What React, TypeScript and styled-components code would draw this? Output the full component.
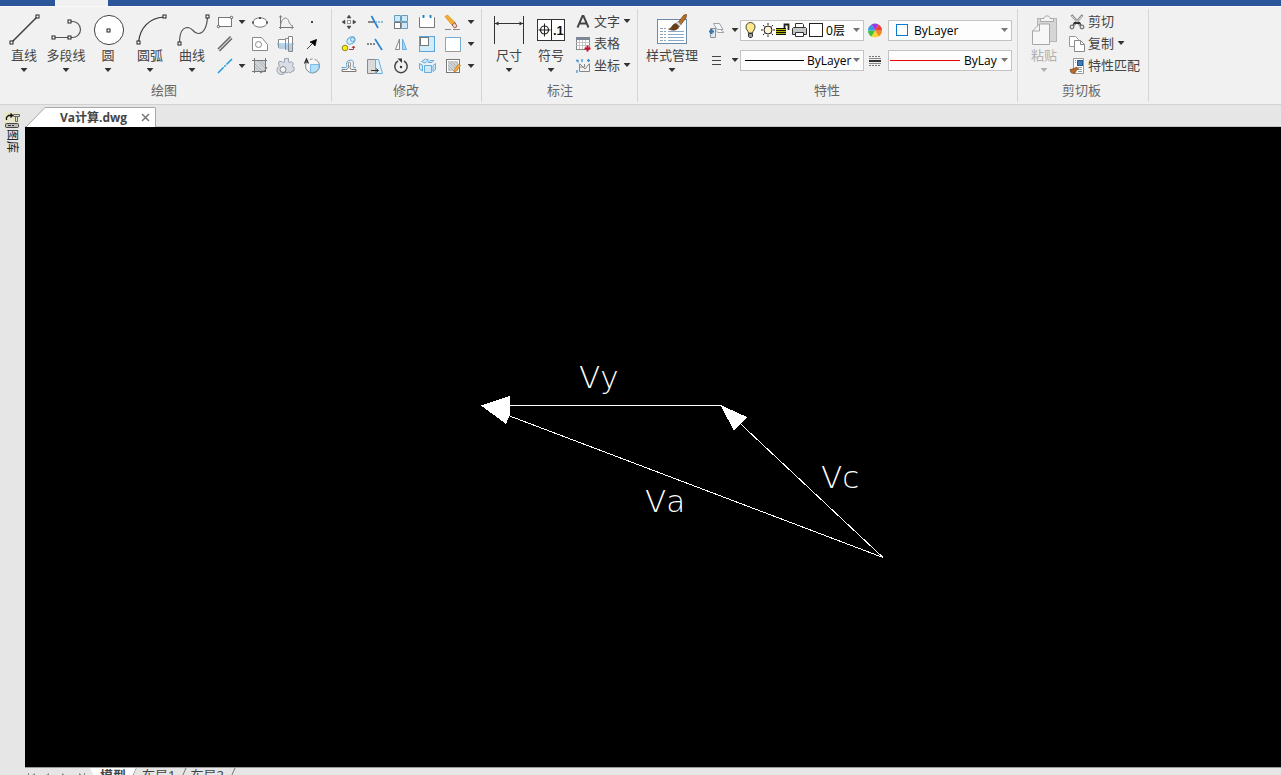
import React from "react";
import styled, { createGlobalStyle, css } from "styled-components";

const GlobalStyle = createGlobalStyle`
  *, *::before, *::after { box-sizing: border-box; }
  html, body { margin: 0; padding: 0; overflow: hidden; }
  body { background: #e6e6e6; }
  body, button, select {
    font-family: "Noto Sans", "Noto Sans CJK SC", sans-serif;
    font-size: 13px;
    color: #444;
  }
  button { border: 0; padding: 0; background: none; }
  svg { display: block; flex: none; overflow: visible; }
`;

/* ---------- frame ---------- */

const Page = styled.div`
  display: flex;
  flex-direction: column;
  height: calc(100vh + 12px);
`;

const TitleBar = styled.header`
  display: flex;
  flex: none;
  height: 6px;
  padding-left: 55px;
  background: #2b579a;
`;

const ActiveRibbonTab = styled.div`
  width: 53px;
  background: #f1f1f1;
`;

const Ribbon = styled.nav`
  display: flex;
  flex: none;
  height: 99px;
  background: #f1f1f1;
  border-top: 1px solid #f9f9f9;
  border-bottom: 1px solid #d2d2d2;
`;

const PanelBox = styled.section<{ $left: number; $right: number }>`
  display: flex;
  flex-direction: column;
  margin: 2px 0;
  padding: 2px ${(p) => p.$right}px 0 ${(p) => p.$left}px;
  border-right: 1px solid #d5d5d5;
`;

const PanelBody = styled.div`
  display: flex;
  height: 68px;
`;

const PanelTitle = styled.h2`
  margin: 0;
  font-size: 13px;
  font-weight: 400;
  line-height: 24px;
  text-align: center;
  color: #666;
`;

function Panel(props: { title: string; left: number; right: number; children: React.ReactNode }) {
  return (
    <PanelBox $left={props.left} $right={props.right}>
      <PanelBody>{props.children}</PanelBody>
      <PanelTitle>{props.title}</PanelTitle>
    </PanelBox>
  );
}

/* ---------- ribbon controls ---------- */

const LargeButton = styled.button<{ $width?: number }>`
  display: flex;
  flex-direction: column;
  align-items: center;
  width: ${(p) => p.$width ?? 42}px;
  padding-top: 3px;
  line-height: 18px;
  white-space: nowrap;
  &:disabled { color: #b0b0b0; }
`;

const Caret = styled.span<{ $color?: string }>`
  flex: none;
  width: 7px;
  height: 4px;
  background: ${(p) => p.$color ?? "#333"};
  clip-path: polygon(0 0, 100% 0, 50% 100%);
`;

const CaretSlot = styled.span`
  display: flex;
  align-items: center;
  justify-content: center;
  height: 12px;
`;

const CaretButton = styled.button`
  display: flex;
  align-items: center;
  justify-content: center;
`;

const ToolGrid = styled.div<{ $columns: string }>`
  display: grid;
  grid-template-columns: ${(p) => p.$columns};
  grid-auto-rows: 22px;
`;

const IconButton = styled.button`
  display: flex;
  align-items: center;
  justify-content: center;
`;

const ToolList = styled.div<{ $indent: number }>`
  display: flex;
  flex-direction: column;
  padding-left: ${(p) => p.$indent}px;
`;

const ListButton = styled.button`
  display: grid;
  grid-template-columns: 18px auto 10px;
  justify-content: start;
  align-items: center;
  gap: 2px;
  height: 22px;
  padding-bottom: 2px;
  line-height: 20px;
  white-space: nowrap;
`;

const WideListButton = styled(ListButton)`
  grid-template-columns: 18px auto;
`;

const PropertyGrid = styled.div`
  display: grid;
  grid-template-columns: 28px 10px 124px 24px 124px;
  grid-auto-rows: 30px;
  padding-top: 4px;
`;

const Combo = styled.label<{ $pad: number }>`
  display: flex;
  align-items: center;
  align-self: center;
  height: 21px;
  padding-left: ${(p) => p.$pad}px;
  padding-right: 3px;
  background: #fdfdfd;
  border: 1px solid #c3c3c3;
`;

const ComboSelect = styled.select<{ $indent: number; $end?: number }>`
  flex: 1;
  width: 0;
  min-width: 0;
  height: 19px;
  margin: 0;
  padding: 0 ${(p) => p.$end ?? 0}px 0 ${(p) => p.$indent}px;
  border: 0;
  appearance: none;
  background: none;
  font-family: "Open Sans", "Noto Sans CJK SC", sans-serif;
  font-size: 12px;
  color: #000;
`;

const Rule = styled.span<{ $color: string; $width: number }>`
  flex: none;
  width: ${(p) => p.$width}px;
  height: 1px;
  background: ${(p) => p.$color};
`;

const Swatch = styled.span<{ $color: string; $size: number }>`
  flex: none;
  width: ${(p) => p.$size}px;
  height: ${(p) => p.$size}px;
  border: 1px solid ${(p) => p.$color};
  background: #fff;
`;

/* ---------- work area ---------- */

const WorkArea = styled.div`
  display: flex;
  flex: 1;
  min-height: 0;
`;

const Sidebar = styled.aside`
  flex: none;
  width: 25px;
  padding: 7px 0 0 4px;
  background: #e6e6e6;
`;

const LibraryTab = styled.button`
  display: flex;
  flex-direction: column;
  align-items: center;
  gap: 1px;
  width: 16px;
  font-size: 12px;
  line-height: 16px;
  color: #222;
`;

const VerticalText = styled.span`
  writing-mode: vertical-rl;
  text-orientation: sideways;
`;

const DocumentColumn = styled.main`
  display: flex;
  flex: 1;
  flex-direction: column;
  min-width: 0;
`;

const DocumentTabs = styled.div`
  display: flex;
  flex: none;
  align-items: flex-end;
  height: 22px;
  border-bottom: 1px solid #c4c4c4;
`;

const DocumentTab = styled.div`
  display: flex;
  height: 20px;
  margin-bottom: -1px;
`;

const DocumentTabFace = styled.div`
  display: flex;
  align-items: center;
  gap: 14px;
  padding: 0 5px 0 13px;
  background: #fff;
  border-top: 1px solid #a8a8a8;
  border-right: 1px solid #a8a8a8;
  border-top-right-radius: 2px;
`;

const DocumentName = styled.span`
  font-family: "Open Sans", "Noto Sans CJK SC", sans-serif;
  font-size: 12px;
  line-height: 18px;
  font-weight: 700;
  white-space: nowrap;
`;

const Canvas = styled.div`
  flex: 1;
  min-height: 0;
  overflow: hidden;
  background: #000;
`;

const Annotation = styled.text`
  font-family: "DejaVu Sans", sans-serif;
  font-size: 31px;
  font-weight: 200;
  font-kerning: none;
  fill: #fff;
`;

const SheetBar = styled.footer`
  display: flex;
  flex: none;
  height: 20px;
  padding-left: 2px;
  background: #e6e6e6;
  border-top: 1px solid #9a9a9a;
`;

const SheetNav = styled.div`
  display: flex;
  width: 63px;
  padding-top: 3px;
`;

const SheetTab = styled.button<{ $active?: boolean }>`
  display: flex;
  align-items: flex-start;
  gap: 3px;
  font-size: 13px;
  line-height: 14px;
  white-space: nowrap;
  ${(p) =>
    p.$active &&
    css`
      padding: 0 10px;
      margin-right: -3px;
      font-weight: 700;
      background: #fff;
      clip-path: polygon(0 0, 100% 0, calc(100% - 9px) 100%, 9px 100%);
    `}
`;

/* ---------- icons ---------- */

function Icon({ size = 20, children }: { size?: number; children: React.ReactNode }) {
  return (
    <svg width={size} height={size} viewBox={`0 0 ${size} ${size}`} fill="none" stroke="#555" aria-hidden="true">
      {children}
    </svg>
  );
}

function Grip({ x, y }: { x: number; y: number }) {
  return <rect x={x - 1.5} y={y - 1.5} width="3" height="3" fill="#fff" stroke="#222" strokeWidth="1" />;
}

const pale = "#cdeafa";
const hatch = "#a9aeb2";

const LineIcon = () => (
  <Icon size={32}>
    <path d="M3.500 28.500 28.500 3.500" stroke="#444" strokeWidth="1.600" />
    <Grip x={3.5} y={28.5} />
    <Grip x={29.5} y={2.5} />
  </Icon>
);
const PolylineIcon = () => (
  <Icon size={32}>
    <path d="M3 23.500H22A8 8 0 0 0 30.500 15.500 8 8 0 0 0 22 7.500H19" stroke="#555" strokeWidth="1.200" />
    <Grip x={3.5} y={23.5} />
    <Grip x={19.5} y={23.5} />
    <Grip x={19.5} y={7.5} />
  </Icon>
);
const CircleIcon = () => (
  <Icon size={32}>
    <circle cx="17" cy="16" r="14.600" fill="#fff" stroke="#444" />
    <Grip x={16.5} y={16.5} />
  </Icon>
);
const ArcIcon = () => (
  <Icon size={32}>
    <path d="M4.500 28.500C6 14 15 4 30 3" stroke="#333" strokeWidth="1.200" />
    <Grip x={4.5} y={28.5} />
    <Grip x={30.5} y={2.5} />
  </Icon>
);
const SplineIcon = () => (
  <Icon size={32}>
    <path d="M3.500 29C3.500 17 7 13.500 12 13.500 17 14 17 19 22 19.500 28 20 31 12 31.500 3" stroke="#555" strokeWidth="1.200" />
    <Grip x={3.5} y={29.5} />
    <Grip x={31.5} y={2.5} />
  </Icon>
);
const DimensionIcon = () => (
  <Icon size={32}>
    <path d="M1.500 2v28M30.500 2v28M2 9.500h28" stroke="#333" />
    <path d="M2 9.500l3.500-2v4zM30 9.500l-3.500-2v4z" fill="#333" stroke="none" />
  </Icon>
);
const SymbolIcon = () => (
  <Icon size={32}>
    <rect x="2.500" y="5.500" width="27" height="21" fill="#fff" stroke="#333" />
    <path d="M16.500 6v20M9.500 9.500v13M3.500 16h12" stroke="#222" />
    <circle cx="9.500" cy="16" r="4" stroke="#222" strokeWidth="1.200" />
    <text x="18" y="21" fontSize="13" fontWeight="700" fontFamily="Liberation Sans, sans-serif" fill="#111" stroke="none">
      .1
    </text>
  </Icon>
);
const StyleIcon = () => (
  <Icon size={32}>
    <rect x="1.500" y="5.500" width="29" height="24" fill="#fff" stroke="#6d8ba8" />
    <path d="M4 14.500h6M4 17.500h6M4 20.500h6M4 23.500h6M4 26.500h6" stroke="#8fa6bd" strokeDasharray="3 1" />
    <path d="M12 17.500h16M12 20.500h16M12 23.500h16M12 26.500h16" stroke="#8aa8cc" />
    <path d="M22 8.500 28 1 30.500 .5 30 4 24.500 11z" fill="#b5702c" stroke="#704519" strokeWidth=".8" />
    <path d="M20 9.500l2-2 3 3-2 2z" fill="#ddd" stroke="#777" strokeWidth=".6" />
    <path d="M12.500 15c3.500 0 3-5 7.500-5.500l3 3c-1 4-6.500 4.500-10.500 2.500z" fill="#6b3f1c" stroke="#4d2c12" strokeWidth=".6" />
  </Icon>
);
const PasteIcon = () => (
  <Icon size={32}>
    <rect x="9.500" y="4.500" width="19" height="23" fill="#d5d5d5" stroke="#b5b5b5" />
    <path d="M12.500 7.500V4.500h3.500c0-3.500 6-3.500 6 0h3.500v3z" fill="#f4f4f4" stroke="#a8a8a8" />
    <path d="M4.500 17l7-7h10v20.500h-17z" fill="#f7f7f7" stroke="#a8a8a8" />
    <path d="M4.500 17h7v-7" stroke="#a8a8a8" />
  </Icon>
);

const RectIcon = () => (
  <Icon>
    <rect x="3.500" y="5.500" width="13" height="9" fill="#fff" stroke="#777" />
    <circle cx="3.500" cy="14.500" r="1.200" fill="#fff" />
    <circle cx="16.500" cy="5.500" r="1.200" fill="#fff" />
  </Icon>
);
const EllipseIcon = () => (
  <Icon>
    <ellipse cx="10" cy="10.500" rx="7" ry="4.700" fill="#fff" stroke="#777" />
    <path d="M9 5h2v2H9zM2 9.500h2v2H2zM16 9.500h2v2h-2z" fill="#555" stroke="none" />
  </Icon>
);
const GraphIcon = () => (
  <Icon>
    <path d="M4.500 4v13M3 15.500h14" stroke="#777" />
    <path d="M4.500 13.500C6 5 10.500 4.500 12.500 8.500c1 3 2 5 4.500 5.500" stroke="#888" />
    <path d="M3 5.500l1.500-2 1.500 2M15.500 14l2 1.500-2 1.500" stroke="#777" strokeWidth=".8" />
  </Icon>
);
const PointIcon = () => (
  <Icon>
    <rect x="9" y="9" width="2" height="2" fill="#444" stroke="none" />
  </Icon>
);
const DoubleLineIcon = () => (
  <Icon>
    <path d="M3 15 15.500 2.500M4.500 17 17 4.500" stroke="#666" strokeWidth="1.500" />
    <path d="M3.500 16.500 16.500 3.500" stroke="#ccc" />
  </Icon>
);
const RegionIcon = () => (
  <Icon>
    <path d="M2.500 3.500h9l6 7v6h-15z" fill="#fff" stroke="#888" />
    <circle cx="8.500" cy="10.500" r="3" stroke="#888" />
  </Icon>
);
const ShaftIcon = () => (
  <Icon>
    <path d="M2.500 5.500h7v8h-7zM9.500 4.500h3v11h-3zM12.500 2.500h4v15h-4z" fill="#fff" stroke="#888" />
    <path d="M3 11h6v4H3zM10 11h2v5h-2zM13 11h3v6h-3z" fill="#b7cfe6" stroke="none" />
    <path d="M1 10h17" stroke="#6aaee0" />
  </Icon>
);
const LeaderIcon = () => (
  <Icon>
    <path d="M5 15 11 9" stroke="#444" />
    <path d="M14.500 5.500 13 12 11 9.500 8 8z" fill="#000" stroke="#000" strokeWidth=".8" />
  </Icon>
);
const CenterLineIcon = () => (
  <Icon>
    <path d="M3 17 17 3" stroke="#1e9be0" strokeWidth="1.500" strokeDasharray="8 1 2 1" />
  </Icon>
);
const HatchIcon = () => (
  <Icon>
    <rect x="4.500" y="4.500" width="11" height="11" fill="#ced2d5" stroke="#777" />
    <path d="M5 8l7 7M5 11l4 4M8 5l7 7M11 5l4 4" stroke={hatch} strokeWidth=".8" />
    <path d="M2 4.500h15M4.500 2v15M15.500 2v10M2 15.500h10" stroke="#777" />
    <path d="M10 17c3-1 6-3 7-6" stroke="#777" />
  </Icon>
);
const GearIcon = () => (
  <Icon>
    <path
      d="M3 5.500h3l1 1 1.500-.5V2.500h4V6l1.500.5 1.500-1 2 2.500-1 1.500.5 1.500h1v4h-2l-1.500 2-2-1-2 1-1-1a4.500 4.500 0 1 1-6-6L2.500 8z"
      fill="#d9dee6"
      stroke="#9aa4b2"
    />
    <circle cx="7" cy="13.500" r="3" fill="#f4f4f4" stroke="#888" />
  </Icon>
);
const ArcTextIcon = () => (
  <Icon>
    <circle cx="10.500" cy="10" r="7" fill="#f6f6f6" stroke="#888" strokeDasharray="28 2 3 2" />
    <path d="M8.500 8.500h8.500c1 5-4 9-8.500 8z" fill="#b4e0fa" stroke="#6aaee0" strokeWidth=".8" />
    <path d="M2.500 7.500 4.500 3l2 4.500M3.500 6h2.500" stroke="#222" strokeWidth="1.200" />
  </Icon>
);

const MoveIcon = () => (
  <Icon>
    <path d="M10 3l2 3h-4zM10 17l2-3h-4zM3 10l3-2v4zM17 10l-3-2v4z" fill="#444" stroke="#444" strokeWidth=".5" />
    <rect x="8.500" y="8.500" width="3" height="3" fill="#fff" stroke="#999" />
  </Icon>
);
const TrimIcon = () => (
  <Icon>
    <path d="M3 10h7" stroke="#666" strokeWidth="1.500" />
    <path d="M6.500 4 13 16" stroke="#2680d4" strokeWidth="1.600" />
    <path d="M10 10h8" stroke="#6ab0e0" strokeWidth="1.500" strokeDasharray="2 1" />
  </Icon>
);
const ArrayIcon = () => (
  <Icon>
    <path d="M3.500 3.500h6v6h-6zM10.500 3.500h6v6h-6zM10.500 10.500h6v6h-6z" fill={pale} stroke="#6a9dbd" />
    <rect x="3.500" y="10.500" width="6" height="6" fill="#fff" stroke="#777" />
  </Icon>
);
const BreakIcon = () => (
  <Icon>
    <path d="M5 5.500H2.500v10h15v-10H15M8 5.500h4" fill="#fff" stroke="#777" />
    <path d="M3 5h14v10H3z" fill="#fff" stroke="none" />
    <path d="M6.500 3v3M13.500 3v3" stroke="#1c7fc4" strokeWidth="1.800" />
  </Icon>
);
const EraseIcon = () => (
  <Icon>
    <path d="M2 4.500 4.500 3 12 10.500 9 13z" fill="#f5ad2e" stroke="#d9921f" strokeWidth=".8" />
    <path d="M9 13l3-2.500 2 4-2.500 1.500z" fill="#e7d6cc" stroke="#8c3b2c" strokeWidth=".8" />
    <path d="M2 17.500h6M10 17.500h7" stroke="#888" />
  </Icon>
);
const CopyObjectIcon = () => (
  <Icon>
    <ellipse cx="12" cy="6.500" rx="4.500" ry="3.300" transform="rotate(-35 12 6.500)" fill="#d5ecf9" stroke="#5ba6da" />
    <circle cx="13.500" cy="5.500" r="2" stroke="#5ba6da" />
    <circle cx="6" cy="14" r="2.800" fill="#f8ee12" stroke="#8d8a1c" />
    <path d="M10 15.500h4.500v-3M13 14l1.500-2 1.500 2" stroke="#b13a32" />
  </Icon>
);
const ExtendIcon = () => (
  <Icon>
    <path d="M2 10h9" stroke="#666" strokeWidth="1.500" strokeDasharray="2 1" />
    <path d="M10 5 17 16" stroke="#2680d4" strokeWidth="1.600" />
  </Icon>
);
const MirrorIcon = () => (
  <Icon>
    <path d="M8.500 5v10.500h-4z" fill="#fff" stroke="#888" />
    <path d="M11.500 5v10.500h4z" fill="#a9d8f5" stroke="#6aaee0" />
  </Icon>
);
const ScaleIcon = () => (
  <Icon>
    <rect x="2.500" y="2.500" width="15" height="15" fill="#d0ecfb" stroke="#5ba6da" />
    <rect x="3.500" y="3.500" width="8" height="8" fill="#fff" stroke="#777" />
  </Icon>
);
const SelectIcon = () => (
  <Icon>
    <path d="M2.500 17.500v-14h15v14z" fill="#fff" stroke="#999" />
    <path d="M2.500 17v-13.500h15V17" stroke="#65b8ec" strokeDasharray="2 1" />
  </Icon>
);
const OffsetIcon = () => (
  <Icon>
    <path d="M2.500 11.500h4c1.500 0 1.500-1 1-3C7 3 15 3 14.500 7c0 2-1 4.500.5 4.500h2" stroke="#5ba6da" />
    <path d="M3 15.500h14v-2h-4.500c-2 0-1.500-3-1-5 .5-3-3-3-2 0 .5 3-.5 5-3 5H3z" fill="#fff" stroke="#777" />
  </Icon>
);
const StretchIcon = () => (
  <Icon>
    <path d="M2.500 3.500h8v14h-8z" fill="#dadada" stroke="#888" />
    <path d="M10.500 3.500h3l4 14h-7z" fill="#dff2fc" stroke="#6aaee0" />
    <path d="M6 14.500h7M11 12.500l2.500 2-2.500 2" stroke="#333" />
  </Icon>
);
const RotateIcon = () => (
  <Icon>
    <path d="M13 5A6.200 6.200 0 1 1 7 5" stroke="#444" strokeWidth="1.500" />
    <path d="M6.500 2.500h4.500v4.500z" fill="#333" stroke="none" />
    <circle cx="10" cy="11" r="1.200" fill="#333" stroke="none" />
  </Icon>
);
const ExplodeIcon = () => (
  <Icon>
    <path d="M2.500 7.500l3 1.500v6l-3-2zM4.500 5.500l4-2.500 3 1-3.500 3z" fill={pale} stroke="#5ba6da" strokeWidth=".9" />
    <path d="M7.500 9.500h7v7h-7zM16 9.500l2.500-2v6L16 15.500zM11 6.500l2-2h4l-2 2z" fill={pale} stroke="#5ba6da" strokeWidth=".9" />
  </Icon>
);
const HatchEditIcon = () => (
  <Icon>
    <rect x="3.500" y="3.500" width="13" height="13" fill="#fff" stroke="#777" />
    <rect x="5" y="5" width="10" height="10" fill="#ced2d5" stroke="none" />
    <path d="M5 9l6 6M5 12l3 3M5 5l7 7M8 5l6 6M12 5l3 3" stroke={hatch} strokeWidth=".8" />
    <path d="M11.500 13.500l4-5.500 2 1.500-4 5.500-2.500 1z" fill="#f3b03f" stroke="#c57a1d" strokeWidth=".8" />
  </Icon>
);

const TextIcon = () => (
  <Icon size={18}>
    <path d="M3.500 15.500 8.500 4h1l5 11.500M5.500 11.500h7" stroke="#444" strokeWidth="1.900" />
  </Icon>
);
const TableIcon = () => (
  <Icon size={18}>
    <rect x="2.500" y="3.500" width="13" height="12" fill="#fff" stroke="#888" />
    <path d="M2 3h14v3H2z" fill="#7b8794" stroke="none" />
    <path d="M2.500 8.500h13M2.500 11.500h13M5.500 6v9M8.500 6v9M11.500 6v9" stroke="#c4c4c4" />
    <path d="M13.500 11.500v6M10.500 14.500h6" stroke="#c8102e" strokeWidth="2" />
  </Icon>
);
const CoordinateIcon = () => (
  <Icon size={18}>
    <path d="M5.500 7.500v8h10v-8M5.500 11h5v-3M6 8l5 5 4-5" stroke="#888" />
    <path d="M2 4.500h2v2M8 3v3M13 4.500h3M3 14v3M14.500 3v3" stroke="#3a94d6" strokeWidth="1.300" />
  </Icon>
);
const CutIcon = () => (
  <Icon size={18}>
    <path d="M3.500 3 13 14M14.500 3 5 14" stroke="#888" strokeWidth="2.400" />
    <path d="M4 4 12 13M14 4 6 13" stroke="#e4e4e4" />
    <path d="M6 10h6l1.500 3-3-1h-3L4.500 13z" fill="#333" stroke="none" />
    <circle cx="4" cy="15" r="1.800" fill="#eee" stroke="#777" strokeWidth="1.300" />
    <circle cx="14" cy="15" r="1.800" fill="#eee" stroke="#777" strokeWidth="1.300" />
  </Icon>
);
const CopyIcon = () => (
  <Icon size={18}>
    <path d="M1.500 2.500h6l3 3v7h-9z" fill="#fff" stroke="#999" />
    <path d="M6.500 6.500h6l4 4v7h-10z" fill="#fff" stroke="#888" />
    <path d="M12.500 6.500v4h4" stroke="#888" />
  </Icon>
);
const MatchIcon = () => (
  <Icon size={18}>
    <path d="M5.500 2.500h10v15h-10z" fill="#fff" stroke="#999" />
    <path d="M10 11.500h4M10 13.500h4M10 15.500h4M7 4.500h1M7 6.500h1" stroke="#999" />
    <rect x="9.500" y="4.500" width="5" height="5" fill="#3c7db8" stroke="#28598a" />
    <path d="M2 13.500c2 0 3-1 4-1l2.500-1.500 2 2L8 14.500c0 3-3 3.500-5 2z" fill="#b76c2a" stroke="#6d3c16" strokeWidth=".7" />
  </Icon>
);

const LayersIcon = () => (
  <Icon>
    <path d="M7.500 8.500h6l4.500 4h-6z" fill="#f8f8f8" stroke="#9ba3ab" />
    <path d="M7.500 3.500h6l3.500 6h-6z" fill="#f8f8f8" stroke="#9ba3ab" />
    <path d="M4.500 8.500h5v9h-5z" fill="#dfe8ef" stroke="#8b949d" />
    <path d="M5.500 9v5M3 11.500h5" stroke="#3777aa" strokeWidth="2" />
  </Icon>
);
const LinesIcon = () => (
  <Icon>
    <path d="M6 6.500h9M6 10.500h9M6 14.500h9" stroke="#444" />
  </Icon>
);
const wheel = ["#f58a1f", "#f7d82e", "#43c03c", "#319de0", "#9a3be0", "#ef3e36"];
const ColorWheelIcon = () => (
  <Icon size={16}>
    {wheel.map((color, i) => (
      <path key={color} d="M7 8.500 14 8.500A7 7 0 0 0 10.500 2.440z" fill={color} stroke="none" transform={`rotate(${i * 60 + 60} 7 8.500)`} />
    ))}
  </Icon>
);
const LineWeightIcon = () => (
  <Icon>
    <path d="M3 6.500h12M3 15.500h12" stroke="#777" strokeDasharray="2 1" />
    <path d="M3 8.500h12M3 13.500h12" stroke="#888" />
    <path d="M3 11h12" stroke="#333" strokeWidth="2" />
  </Icon>
);
const BulbIcon = () => (
  <svg width="16" height="18" viewBox="0 0 16 18" aria-hidden="true">
    <path d="M4.500 12C4 9 2 9 2 6a4.500 4.500 0 0 1 9 0c0 3-2 3-2.500 6z" fill="#ffe98a" stroke="#444" />
    <path d="M4.500 12.500h4v3l-1 1h-2l-1-1z" fill="#999" stroke="#333" />
  </svg>
);
const SunIcon = () => (
  <svg width="16" height="18" viewBox="0 0 16 18" aria-hidden="true">
    <path d="M8 2v2M8 14v2M1 9h2M13 9h2M3 4l1.500 1.500M11.500 12.500 13 14M13 4l-1.500 1.500M4.500 12.500 3 14" stroke="#222" />
    <circle cx="8" cy="9" r="4" fill="#fff3d6" stroke="#222" />
  </svg>
);
const LockIcon = () => (
  <svg width="15" height="18" viewBox="0 0 15 18" aria-hidden="true">
    <path d="M8.500 8V3.500h4V9" fill="none" stroke="#222" strokeWidth="1.800" />
    <path d="M0 7h10v7H0z" fill="#b5b500" />
    <path d="M0 7.500h10M0 9.500h10M0 11.500h10M0 13.500h10" stroke="#111" />
  </svg>
);
const PrinterIcon = () => (
  <svg width="18" height="18" viewBox="0 0 18 18" aria-hidden="true">
    <path d="M4.500 7V2.500h7l1 1V7" fill="#fff" stroke="#333" />
    <path d="M1.500 7.500l1-1h12l1 1v6h-14z" fill="#c6c6c6" stroke="#333" />
    <path d="M4.500 11.500h8v4h-8z" fill="#fff" stroke="#333" />
  </svg>
);
const LibraryIcon = () => (
  <Icon size={16}>
    <rect width="16" height="16" fill="#e8e7c9" stroke="none" />
    <path d="M2.500 8V5.500l2-2h4M6.500 1.500l2 2-2 2" stroke="#111" strokeWidth="1.300" />
    <path d="M9.500 2.500h6v2h-6zM11.500 4.500h2v5h-2z" fill="#ddd" stroke="#666" />
    <rect x="1.500" y="11.500" width="13" height="4" rx="1" fill="#bbb" stroke="#444" />
    <path d="M4 13.500h3M8 13.500h2" stroke="#333" />
  </Icon>
);
const CloseIcon = () => (
  <svg width="9" height="9" viewBox="0 0 9 9" aria-hidden="true">
    <path d="M1 1l7 7M8 1 1 8" stroke="#777" strokeWidth="1.500" />
  </svg>
);

/* ---------- composition ---------- */

function Large(props: { icon: React.ReactNode; label: string; width?: number; disabled?: boolean }) {
  return (
    <LargeButton $width={props.width} disabled={props.disabled}>
      {props.icon}
      <span>{props.label}</span>
      <CaretSlot>
        <Caret $color={props.disabled ? "#b0b0b0" : undefined} />
      </CaretSlot>
    </LargeButton>
  );
}

function Tool({ name, children }: { name: string; children: React.ReactNode }) {
  return (
    <IconButton aria-label={name} title={name}>
      {children}
    </IconButton>
  );
}

function More({ name }: { name: string }) {
  return (
    <CaretButton aria-label={name}>
      <Caret />
    </CaretButton>
  );
}

export default function App() {
  return (
    <>
      <GlobalStyle />
      <Page>
        <TitleBar>
          <ActiveRibbonTab />
        </TitleBar>

        <Ribbon aria-label="功能区">
          <Panel title="绘图" left={3} right={6}>
            <Large icon={<LineIcon />} label="直线" />
            <Large icon={<PolylineIcon />} label="多段线" />
            <Large icon={<CircleIcon />} label="圆" />
            <Large icon={<ArcIcon />} label="圆弧" />
            <Large icon={<SplineIcon />} label="曲线" />
            <ToolGrid $columns="24px 10px 26px 26px 26px">
              <Tool name="矩形"><RectIcon /></Tool>
              <More name="矩形选项" />
              <Tool name="椭圆"><EllipseIcon /></Tool>
              <Tool name="函数曲线"><GraphIcon /></Tool>
              <Tool name="点"><PointIcon /></Tool>
              <Tool name="双线"><DoubleLineIcon /></Tool>
              <span />
              <Tool name="局部放大"><RegionIcon /></Tool>
              <Tool name="轴"><ShaftIcon /></Tool>
              <Tool name="箭头"><LeaderIcon /></Tool>
              <Tool name="中心线"><CenterLineIcon /></Tool>
              <More name="中心线选项" />
              <Tool name="填充"><HatchIcon /></Tool>
              <Tool name="齿轮"><GearIcon /></Tool>
              <Tool name="视图"><ArcTextIcon /></Tool>
            </ToolGrid>
          </Panel>

          <Panel title="修改" left={4} right={5}>
            <ToolGrid $columns="repeat(5, 26px) 10px">
              <Tool name="移动"><MoveIcon /></Tool>
              <Tool name="裁剪"><TrimIcon /></Tool>
              <Tool name="阵列"><ArrayIcon /></Tool>
              <Tool name="打断"><BreakIcon /></Tool>
              <Tool name="删除"><EraseIcon /></Tool>
              <More name="删除选项" />
              <Tool name="平移复制"><CopyObjectIcon /></Tool>
              <Tool name="延伸"><ExtendIcon /></Tool>
              <Tool name="镜像"><MirrorIcon /></Tool>
              <Tool name="缩放"><ScaleIcon /></Tool>
              <Tool name="选择"><SelectIcon /></Tool>
              <More name="选择选项" />
              <Tool name="等距线"><OffsetIcon /></Tool>
              <Tool name="拉伸"><StretchIcon /></Tool>
              <Tool name="旋转"><RotateIcon /></Tool>
              <Tool name="分解"><ExplodeIcon /></Tool>
              <Tool name="填充编辑"><HatchEditIcon /></Tool>
              <More name="填充编辑选项" />
            </ToolGrid>
          </Panel>

          <Panel title="标注" left={6} right={5}>
            <Large icon={<DimensionIcon />} label="尺寸" />
            <Large icon={<SymbolIcon />} label="符号" />
            <ToolList $indent={2}>
              <ListButton>
                <TextIcon />文字<CaretSlot><Caret /></CaretSlot>
              </ListButton>
              <ListButton>
                <TableIcon />表格
              </ListButton>
              <ListButton>
                <CoordinateIcon />坐标<CaretSlot><Caret /></CaretSlot>
              </ListButton>
            </ToolList>
          </Panel>

          <Panel title="特性" left={4} right={5}>
            <Large icon={<StyleIcon />} label="样式管理" width={60} />
            <PropertyGrid>
              <Tool name="图层"><LayersIcon /></Tool>
              <More name="图层选项" />
              <Combo $pad={3}>
                <BulbIcon />
                <SunIcon />
                <LockIcon />
                <PrinterIcon />
                <Swatch $color="#222" $size={14} />
                <ComboSelect $indent={3} aria-label="当前图层">
                  <option>0层</option>
                </ComboSelect>
                <Caret $color="#777" />
              </Combo>
              <Tool name="颜色"><ColorWheelIcon /></Tool>
              <Combo $pad={7}>
                <Swatch $color="#0a78d0" $size={12} />
                <ComboSelect $indent={6} aria-label="颜色">
                  <option>ByLayer</option>
                </ComboSelect>
                <Caret $color="#777" />
              </Combo>

              <Tool name="线宽"><LinesIcon /></Tool>
              <More name="线宽选项" />
              <Combo $pad={4}>
                <Rule $color="#000" $width={59} />
                <ComboSelect $indent={3} aria-label="线宽">
                  <option>ByLayer</option>
                </ComboSelect>
                <Caret $color="#777" />
              </Combo>
              <Tool name="线型"><LineWeightIcon /></Tool>
              <Combo $pad={1}>
                <Rule $color="#f00000" $width={70} />
                <ComboSelect $indent={4} $end={4} aria-label="线型">
                  <option>ByLayer</option>
                </ComboSelect>
                <Caret $color="#777" />
              </Combo>
            </PropertyGrid>
          </Panel>

          <Panel title="剪切板" left={5} right={8}>
            <Large icon={<PasteIcon />} label="粘贴" disabled />
            <ToolList $indent={3}>
              <ListButton>
                <CutIcon />剪切
              </ListButton>
              <ListButton>
                <CopyIcon />复制<CaretSlot><Caret /></CaretSlot>
              </ListButton>
              <WideListButton>
                <MatchIcon />特性匹配
              </WideListButton>
            </ToolList>
          </Panel>
        </Ribbon>

        <WorkArea>
          <Sidebar>
            <LibraryTab>
              <LibraryIcon />
              <VerticalText>图库</VerticalText>
            </LibraryTab>
          </Sidebar>

          <DocumentColumn>
            <DocumentTabs>
              <DocumentTab>
                <svg width="22" height="20" viewBox="0 0 22 20" aria-hidden="true">
                  <path d="M1 20 20 .5H22V20z" fill="#fff" />
                  <path d="M1 20 20 .5H22" fill="none" stroke="#a8a8a8" />
                </svg>
                <DocumentTabFace>
                  <DocumentName>Va计算.dwg</DocumentName>
                  <button aria-label="关闭">
                    <CloseIcon />
                  </button>
                </DocumentTabFace>
              </DocumentTab>
            </DocumentTabs>

            <Canvas>
              <svg width="100%" height="100%" aria-label="速度矢量图">
                <g stroke="#fff" shapeRendering="crispEdges">
                  <path d="M457 278.500H696" />
                  <path d="M457 278.500 858 430.500" />
                  <path d="M696 278.500 858 430.500" />
                </g>
                <g fill="#fff" shapeRendering="crispEdges">
                  <path d="M456 278.500 485 269V287L481 297z" />
                  <path d="M695.500 278 722 290 709 304z" />
                </g>
                <Annotation x="554" y="261">Vy</Annotation>
                <Annotation x="620" y="385">Va</Annotation>
                <Annotation x="796" y="361">Vc</Annotation>
              </svg>
            </Canvas>

            <SheetBar>
              <SheetNav>
                <svg width="60" height="10" viewBox="0 0 60 10" fill="#888" aria-hidden="true">
                  <path d="M1 2h1v7H1zM8 2v7L3.500 5.500zM22 2v7l-4.500-3.500zM35 2v7l4.500-3.500zM52 2v7l4.500-3.500zM57 2h1v7h-1z" />
                </svg>
              </SheetNav>
              <SheetTab $active>模型</SheetTab>
              <SheetTab>
                <svg width="6" height="20" viewBox="0 0 6 20" aria-hidden="true">
                  <path d="M3 0-5 18" stroke="#777" />
                </svg>
                布局1
              </SheetTab>
              <SheetTab>
                <svg width="12" height="20" viewBox="0 0 12 20" aria-hidden="true">
                  <path d="M11 0 3 18" stroke="#777" />
                </svg>
                布局2
              </SheetTab>
              <svg width="12" height="20" viewBox="0 0 12 20" aria-hidden="true">
                <path d="M11 0 3 18" stroke="#777" />
              </svg>
            </SheetBar>
          </DocumentColumn>
        </WorkArea>
      </Page>
    </>
  );
}
